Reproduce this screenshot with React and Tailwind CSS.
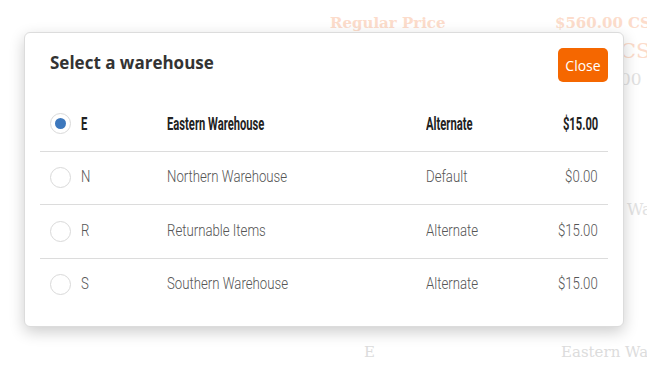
import React from "react";

const rows = [
  { code: "E", name: "Eastern Warehouse", type: "Alternate", price: "$15.00", sel: true },
  { code: "N", name: "Northern Warehouse", type: "Default", price: "$0.00" },
  { code: "R", name: "Returnable Items", type: "Alternate", price: "$15.00" },
  { code: "S", name: "Southern Warehouse", type: "Alternate", price: "$15.00" },
];

const cond = { fontFamily: 'Roboto, "Liberation Sans", sans-serif' };

function T({ sel, right, children }) {
  return (
    <span
      className={`inline-block whitespace-nowrap ${right ? "origin-right" : "origin-left"} ${sel ? "scale-x-[0.64]" : "scale-x-[0.8]"}`}
    >
      {children}
    </span>
  );
}

export default function App() {
  return (
    <div className="relative w-[647px] h-[369px] overflow-hidden bg-white">
      {/* faded page behind */}
      <div className="flex flex-col pt-[13px] whitespace-nowrap" style={{ fontFamily: '"DejaVu Serif", serif' }}>
        <div className="flex items-center h-[20px] pl-[330px] text-[15px] font-semibold text-[#fcdccb]">
          <span className="w-[225px] shrink-0">Regular Price</span>
          <span className="shrink-0">$560.00 CS</span>
        </div>
        <div className="flex items-center h-[30px] mt-[4px] pl-[620px] text-[#fcdccb] text-[21px]">
          <span className="shrink-0">CS</span>
        </div>
        <div className="flex items-center h-[20px] mt-[3px] pl-[620px] text-[#e2e2e2] text-[17px]">
          <span className="shrink-0">00</span>
        </div>
        <div className="flex items-center h-[20px] mt-[110px] pl-[627px] text-[#e2e2e2] text-[16px]">
          <span className="shrink-0">Wa</span>
        </div>
        <div className="flex items-center h-[20px] mt-[122px] pl-[364px] text-[#dcdcdc] text-[15px]">
          <span className="w-[197px] shrink-0">E</span>
          <span className="shrink-0">Eastern Warehouse</span>
        </div>
      </div>

      {/* modal */}
      <div className="absolute left-[24px] top-[32px] w-[600px] h-[295px] bg-white border border-[#dcdcdc] rounded-[6px] shadow-[0_5px_15px_rgba(0,0,0,0.2)]">
        <div className="flex items-start justify-between pl-[25px] pr-[15px] pt-[15px]">
          <h2 className="text-[17px] font-bold text-[#333] mt-[2px]" style={{ fontFamily: '"Open Sans", sans-serif' }}>
            Select a warehouse
          </h2>
          <button className="w-[50px] h-[34px] rounded-[5px] bg-[#f56700] text-white text-[14px]" style={{ fontFamily: '"Open Sans", sans-serif' }}>
            Close
          </button>
        </div>
        <div className="mx-[15px] mt-[15px]">
          {rows.map((r, i) => (
            <div
              key={r.code}
              className={`flex items-center h-[53.5px] ${i > 0 ? "border-t border-[#dcdcdc]" : ""} ${r.sel ? "text-[17.5px] font-bold text-[#222]" : "text-[16.5px] font-light text-[#555]"}`}
              style={cond}
            >
              <div className="w-[41px] pl-[10px] flex shrink-0">
                <span className="w-[21px] h-[21px] rounded-full border border-[#d9d9d9] flex items-center justify-center">
                  {r.sel && <span className="w-[11px] h-[11px] rounded-full bg-[#3d78bd]" />}
                </span>
              </div>
              <div className="w-[86px] shrink-0"><T sel={r.sel}>{r.code}</T></div>
              <div className="w-[259px] shrink-0"><T sel={r.sel}>{r.name}</T></div>
              <div className="flex-1"><T sel={r.sel}>{r.type}</T></div>
              <div className="pr-[10px] text-right"><T sel={r.sel} right>{r.price}</T></div>
            </div>
          ))}
        </div>
      </div>
    </div>
  );
}
